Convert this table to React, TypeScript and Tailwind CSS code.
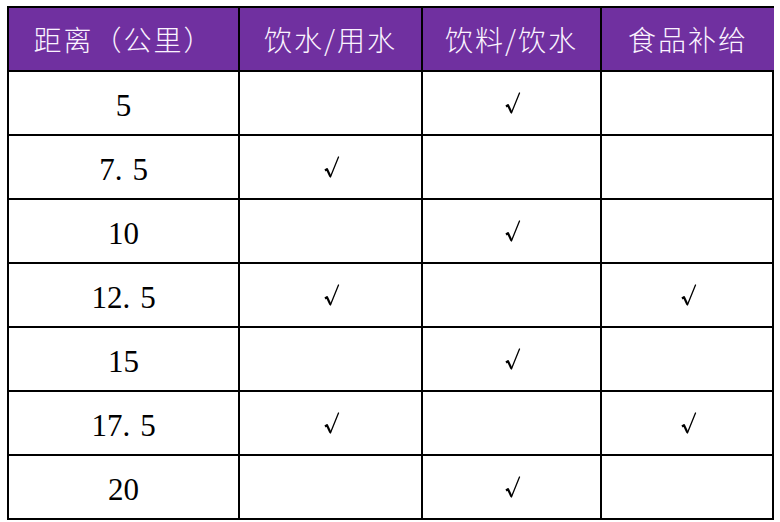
const headers = ["距离（公里）", "饮水/用水", "饮料/饮水", "食品补给"];

const rows: { km: string; marks: [boolean, boolean, boolean] }[] = [
  { km: "5", marks: [false, true, false] },
  { km: "7.5", marks: [true, false, false] },
  { km: "10", marks: [false, true, false] },
  { km: "12.5", marks: [true, false, true] },
  { km: "15", marks: [false, true, false] },
  { km: "17.5", marks: [true, false, true] },
  { km: "20", marks: [false, true, false] },
];

const cell = "h-[64px] flex items-center justify-center border-l-2 border-t-2 border-black";

const Km = ({ value }: { value: string }) => {
  const [a, b] = value.split(".");
  return (
    <span className="text-[31px] leading-none text-black pt-[4px]" style={{ fontFamily: '"Liberation Serif", serif' }}>
      {a}
      {b !== undefined && (
        <>
          <span className="mr-[10px]">.</span>
          {b}
        </>
      )}
    </span>
  );
};

// the tick mark used in the cells
const Tick = () => (
  <svg width="16" height="24" viewBox="0 0 16 24" className="mt-[2px] ml-[2px]">
    <path d="M1 14.5 L3 13.2 L6.4 20.5" fill="none" stroke="#000" strokeWidth="2.2" strokeLinejoin="round" />
    <path d="M6.4 21 L14.5 1" fill="none" stroke="#000" strokeWidth="1.3" strokeLinecap="round" />
  </svg>
);

export default function App() {
  return (
    <div className="w-[780px] h-[522px] bg-white pt-[6px] pl-[7px]">
      <div className="w-[767px] grid grid-cols-[231px_183px_179px_174px] border-r-2 border-b-2 border-black">
        {headers.map((h) => (
          <div key={h} className={`${cell} bg-[#7030a0]`}>
            <span
              className="text-[#fbf4ff] text-[28px] tracking-[2px] font-light"
              style={{ fontFamily: '"Noto Sans CJK SC", sans-serif' }}
            >
              {h}
            </span>
          </div>
        ))}
        {rows.map((r) => (
          <div key={r.km} className="contents">
            <div className={cell}>
              <Km value={r.km} />
            </div>
            {r.marks.map((m, i) => (
              <div key={i} className={cell}>
                {m && <Tick />}
              </div>
            ))}
          </div>
        ))}
      </div>
    </div>
  );
}
